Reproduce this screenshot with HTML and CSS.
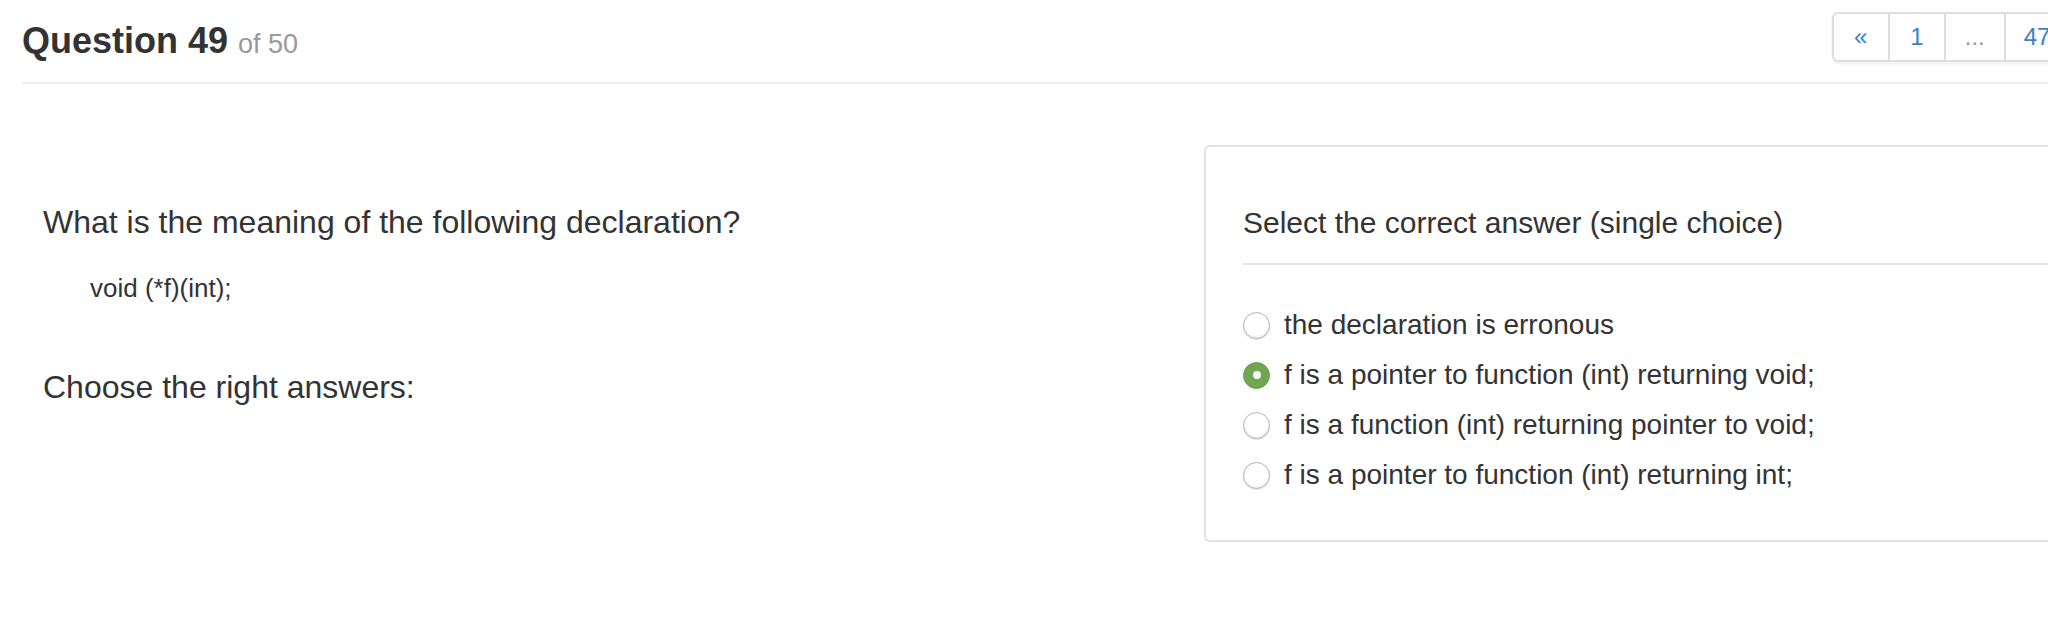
FILE: index.html
```html
<!DOCTYPE html>
<html lang="en">
<head>
<meta charset="utf-8">
<title>Question 49 of 50</title>
<link rel="stylesheet" href="styles.css">
</head>
<body>
<div class="page">
  <header class="header">
    <h1 class="title">Question 49 <small class="title-sub">of 50</small></h1>
    <nav class="pager">
      <a class="pager-cell pager-first">&laquo;</a>
      <a class="pager-cell">1</a>
      <span class="pager-cell pager-gap">...</span>
      <a class="pager-cell pager-last">47</a>
    </nav>
  </header>
  <main class="content">
    <section class="question">
      <p class="q-text">What is the meaning of the following declaration?</p>
      <p class="q-code">void (*f)(int);</p>
      <p class="q-text q-choose">Choose the right answers:</p>
    </section>
    <section class="panel">
      <h2 class="panel-title">Select the correct answer (single choice)</h2>
      <ul class="options">
        <li class="option"><span class="radio"></span><span class="option-text">the declaration is erronous</span></li>
        <li class="option"><span class="radio radio-on"></span><span class="option-text">f is a pointer to function (int) returning void;</span></li>
        <li class="option"><span class="radio"></span><span class="option-text">f is a function (int) returning pointer to void;</span></li>
        <li class="option"><span class="radio"></span><span class="option-text">f is a pointer to function (int) returning int;</span></li>
      </ul>
    </section>
  </main>
</div>
</body>
</html>
```
FILE: styles.css
```css
html, body {
  margin: 0;
  padding: 0;
  background: #fff;
  overflow: hidden;
}
body {
  font-family: "Liberation Sans", Arial, Helvetica, sans-serif;
  color: #333;
}
.page {
  width: 2400px;
  padding-left: 22px;
}
.header {
  display: flex;
  align-items: flex-start;
  padding-top: 12px;
  padding-bottom: 18px;
  border-bottom: 2px solid #eee;
}
.title {
  flex: 0 0 1810px;
  margin: 9px 0 0 0;
  font-size: 36px;
  line-height: 40px;
  font-weight: bold;
  color: #333;
}
.title-sub {
  font-size: 27px;
  font-weight: normal;
  color: #999;
}
.pager {
  display: flex;
  border: 2px solid #ddd;
  border-radius: 6px;
  box-shadow: 0 2px 3px rgba(0,0,0,0.06);
  overflow: hidden;
}
.pager-cell {
  display: block;
  height: 46px;
  line-height: 46px;
  padding: 0 20px;
  font-size: 24px;
  color: #3a82c4;
  border-left: 2px solid #ddd;
  text-decoration: none;
}
.pager-first {
  border-left: 0;
  padding: 0 21px 0 20px;
}
.pager-gap {
  color: #999;
  padding: 0 19px;
}
.pager-last {
  padding: 0 18px;
}
.content {
  display: grid;
  grid-template-columns: 1182px 1000px;
  align-items: start;
  margin-top: 61px;
}
.question {
  padding: 57px 0 0 21px;
}
.q-text {
  margin: 0;
  font-size: 32px;
  line-height: 40px;
}
.q-code {
  margin: 28px 0 0 47px;
  font-size: 26px;
  line-height: 36px;
}
.q-choose {
  margin-top: 61px;
}
.panel {
  border: 2px solid #e2e2e2;
  border-radius: 6px;
  box-shadow: 0 1px 2px rgba(0,0,0,0.04);
  padding: 58px 0 40px 37px;
}
.panel-title {
  margin: 0;
  padding-bottom: 22px;
  border-bottom: 2px solid #e5e5e5;
  font-size: 30px;
  line-height: 36px;
  font-weight: normal;
  color: #333;
}
.options {
  list-style: none;
  margin: 35px 0 0 0;
  padding: 0;
}
.option {
  display: flex;
  align-items: center;
  height: 50px;
  font-size: 28px;
}
.radio {
  box-sizing: border-box;
  flex: 0 0 27px;
  width: 27px;
  height: 27px;
  margin-right: 14px;
  border: 1px solid #b3b3b3;
  border-radius: 50%;
  background: #fff;
  box-shadow: inset 0 -2px 2px rgba(0,0,0,0.06), 0 1px 1px rgba(0,0,0,0.1);
  display: flex;
  align-items: center;
  justify-content: center;
}
.radio-on {
  background: #70a64f;
  border-color: #6a9f49;
  box-shadow: none;
}
.radio-on::after {
  content: "";
  width: 8px;
  height: 8px;
  border-radius: 50%;
  background: #fff;
}
.option-text {
  line-height: 34px;
}
```
